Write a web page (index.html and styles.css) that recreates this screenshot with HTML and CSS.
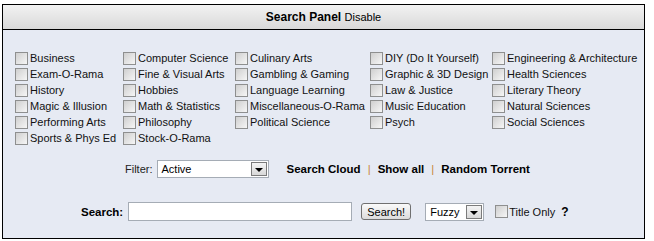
FILE: index.html
```html
<!DOCTYPE html>
<html lang="en">
<head>
  <meta charset="UTF-8" />
  <title>Search Panel</title>
  <link rel="stylesheet" href="styles.css">
</head>
<body>
  <div class="panel">
    <div class="panel-head">
      <b>Search Panel</b> <a href="#" class="toggle">Disable</a>
    </div>

    <div class="panel-body">
      <div class="cats">
        <label><input type="checkbox" /> Business</label>
        <label><input type="checkbox" /> Computer Science</label>
        <label><input type="checkbox" /> Culinary Arts</label>
        <label><input type="checkbox" /> DIY (Do It Yourself)</label>
        <label><input type="checkbox" /> Engineering &amp; Architecture</label>

        <label><input type="checkbox" /> Exam-O-Rama</label>
        <label><input type="checkbox" /> Fine &amp; Visual Arts</label>
        <label><input type="checkbox" /> Gambling &amp; Gaming</label>
        <label><input type="checkbox" /> Graphic &amp; 3D Design</label>
        <label><input type="checkbox" /> Health Sciences</label>

        <label><input type="checkbox" /> History</label>
        <label><input type="checkbox" /> Hobbies</label>
        <label><input type="checkbox" /> Language Learning</label>
        <label><input type="checkbox" /> Law &amp; Justice</label>
        <label><input type="checkbox" /> Literary Theory</label>

        <label><input type="checkbox" /> Magic &amp; Illusion</label>
        <label><input type="checkbox" /> Math &amp; Statistics</label>
        <label><input type="checkbox" /> Miscellaneous-O-Rama</label>
        <label><input type="checkbox" /> Music Education</label>
        <label><input type="checkbox" /> Natural Sciences</label>

        <label><input type="checkbox" /> Performing Arts</label>
        <label><input type="checkbox" /> Philosophy</label>
        <label><input type="checkbox" /> Political Science</label>
        <label><input type="checkbox" /> Psych</label>
        <label><input type="checkbox" /> Social Sciences</label>

        <label><input type="checkbox" /> Sports &amp; Phys Ed</label>
        <label><input type="checkbox" /> Stock-O-Rama</label>
      </div>

      <div class="filter-row">
        <span class="filter-label">Filter:</span>
        <div class="select select-filter">
          <span class="select-text">Active</span>
          <span class="select-btn"><i></i></span>
        </div>
        <nav class="links">
          <a href="#">Search Cloud</a>
          <span class="sep">|</span>
          <a href="#">Show all</a>
          <span class="sep">|</span>
          <a href="#">Random Torrent</a>
        </nav>
      </div>

      <form class="search-row">
        <label for="q" class="search-label">Search:</label>
        <input type="text" id="q" class="search-input" />
        <button type="submit" class="search-btn">Search!</button>
        <div class="select select-mode">
          <span class="select-text">Fuzzy</span>
          <span class="select-btn"><i></i></span>
        </div>
        <label class="title-only"><input type="checkbox" /> Title Only</label>
        <a href="#" class="help">?</a>
      </form>
    </div>
  </div>
</body>
</html>
```

FILE: styles.css
```css
body {
  margin: 4px 0 0 2px;
  background-color: #fff;
  font-family: 'Liberation Sans', Arial, sans-serif;
  font-size: 11px;
  color: #000;
}

a {
  color: #000;
  text-decoration: none;
}

.panel {
  width: 641px;
  height: 233px;
  border: 1px solid #000;
  background-color: #e6eaf3;
}

.panel-head {
  height: 24px;
  line-height: 25px;
  text-align: center;
  border-bottom: 1px solid #000;
  background: linear-gradient(#f2f2f2, #d9d9d9);
  font-size: 12px;
}

.panel-head b {
  font-weight: bold;
}

.toggle {
  font-size: 11px;
}

.panel-body {
  padding: 20px 0 0 12px;
}

/* categories */
.cats {
  display: grid;
  grid-template-columns: 108px 112px 135px 122px auto;
  grid-auto-rows: 16px;
}

.cats label,
.title-only {
  display: flex;
  align-items: center;
  white-space: nowrap;
  color: #111;
}

input[type="checkbox"] {
  appearance: none;
  -webkit-appearance: none;
  width: 13px;
  height: 13px;
  margin: 0 2px 0 0;
  border: 1px solid #8e8f8f;
  background: linear-gradient(135deg, #cfcfcf, #f6f6f6);
  box-sizing: border-box;
}

/* filter row */
.filter-row {
  display: flex;
  align-items: center;
  margin: 14px 0 0 110px;
  height: 18px;
}

.filter-label {
  color: #222;
  margin-right: 4px;
}

.select {
  display: flex;
  align-items: center;
  box-sizing: border-box;
  border: 1px solid #a5acb5;
  background-color: #fff;
  height: 18px;
}

.select-text {
  flex: 1;
  padding-left: 4px;
}

.select-btn {
  display: flex;
  align-items: center;
  justify-content: center;
  box-sizing: border-box;
  width: 16px;
  height: 14px;
  margin-right: 1px;
  border: 1px solid #7b7b7b;
  background: linear-gradient(#f4f4f4, #d8d8d8);
}

.select-btn i {
  width: 0;
  height: 0;
  margin-top: 2px;
  border-left: 4px solid transparent;
  border-right: 4px solid transparent;
  border-top: 4px solid #000;
}

.select-filter {
  width: 112px;
}

.links {
  display: flex;
  align-items: center;
  margin-left: 18px;
  font-weight: bold;
  font-size: 11.5px;
}

.links .sep {
  color: #c8883e;
  font-weight: normal;
  margin: 0 7px;
}

/* search row */
.search-row {
  display: flex;
  align-items: center;
  margin: 24px 0 0 66px;
  height: 19px;
}

.search-label {
  font-weight: bold;
  font-size: 11.5px;
  margin-right: 5px;
}

.search-input {
  box-sizing: border-box;
  width: 224px;
  height: 19px;
  border: 1px solid #a5acb5;
  margin: 0;
}

.search-btn {
  box-sizing: border-box;
  margin-left: 9px;
  width: 50px;
  height: 17px;
  padding: 0;
  border: 1px solid #707070;
  border-radius: 3px;
  background: linear-gradient(#fafafa, #dcdcdc);
  font-family: inherit;
  font-size: 11px;
  color: #000;
}

.select-mode {
  width: 59px;
  margin-left: 14px;
}

.title-only {
  margin-left: 11px;
}

.title-only input {
  margin-right: 1px;
}

.help {
  font-weight: bold;
  font-size: 12px;
  margin-left: 6px;
}
```
